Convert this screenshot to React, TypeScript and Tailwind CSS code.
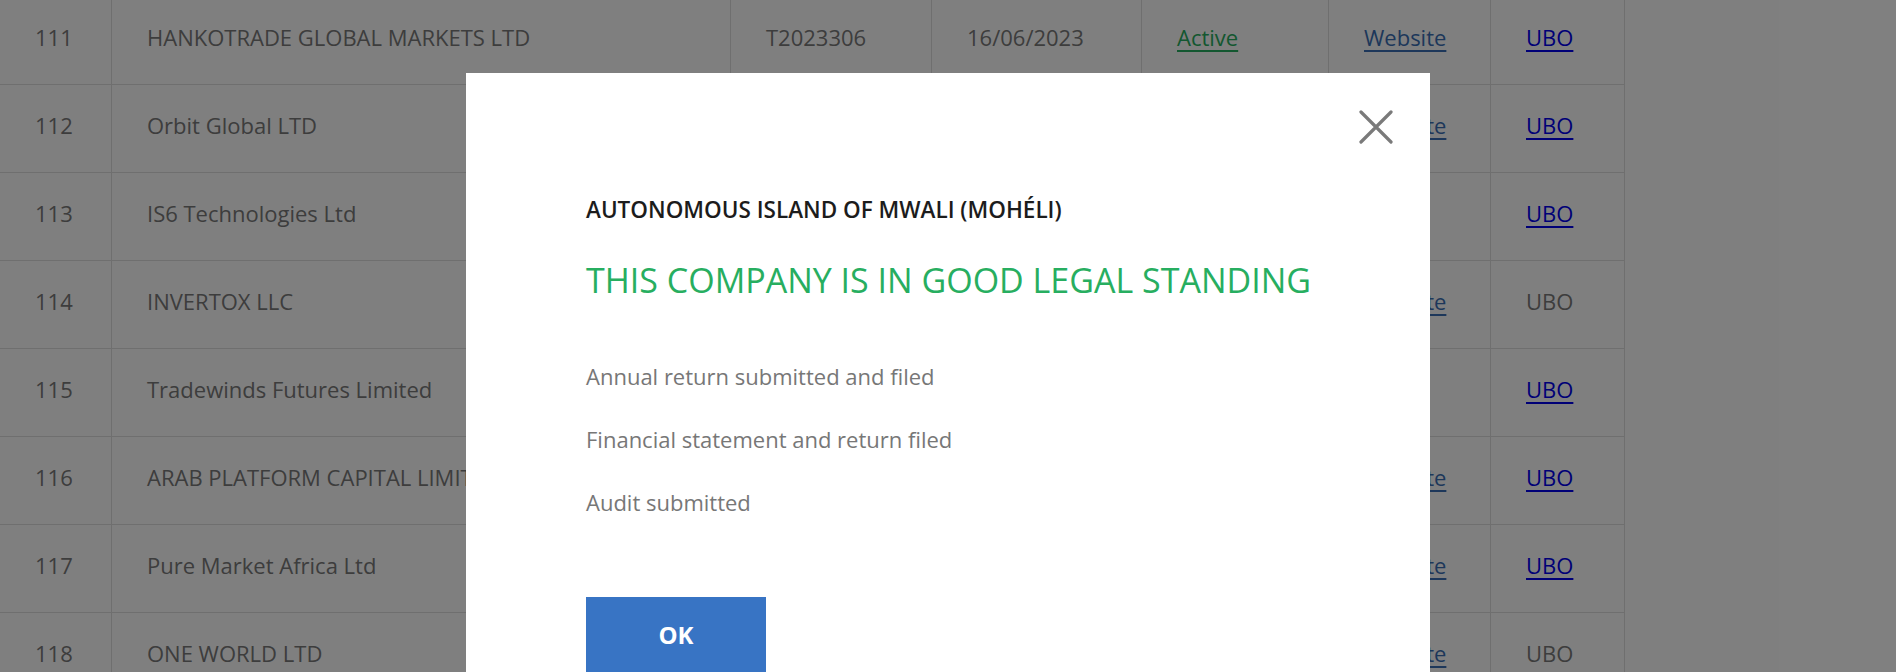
import React from "react";

type Row = {
  no: string;
  name: string;
  code: string;
  date: string;
  website: boolean;
  ubo: boolean;
};

const rows: Row[] = [
  { no: "111", name: "HANKOTRADE GLOBAL MARKETS LTD", code: "T2023306", date: "16/06/2023", website: true, ubo: true },
  { no: "112", name: "Orbit Global LTD", code: "T2023307", date: "19/06/2023", website: true, ubo: true },
  { no: "113", name: "IS6 Technologies Ltd", code: "T2023308", date: "20/06/2023", website: false, ubo: true },
  { no: "114", name: "INVERTOX LLC", code: "T2023309", date: "21/06/2023", website: true, ubo: false },
  { no: "115", name: "Tradewinds Futures Limited", code: "T2023310", date: "22/06/2023", website: false, ubo: true },
  { no: "116", name: "ARAB PLATFORM CAPITAL LIMITED", code: "T2023311", date: "23/06/2023", website: true, ubo: true },
  { no: "117", name: "Pure Market Africa Ltd", code: "T2023312", date: "26/06/2023", website: true, ubo: true },
  { no: "118", name: "ONE WORLD LTD", code: "T2023313", date: "27/06/2023", website: true, ubo: false },
];

const cell = "flex items-center pl-[35px] pb-[6px] border-r border-[#dedede] shrink-0";

function CloseIcon() {
  return (
    <svg width="34" height="34" viewBox="0 0 34 34" fill="none">
      <path d="M2 2 L32 32 M32 2 L2 32" stroke="#7a7a7a" strokeWidth="3.2" strokeLinecap="round" />
    </svg>
  );
}

export default function App() {
  return (
    <main className="relative h-[672px] overflow-hidden bg-white font-['Open_Sans',sans-serif]">
      {/* registry table behind the dialog */}
      <div className="-mt-[3px] w-[1625px] text-[22px] text-[#7a7a7a]">
        {rows.map((r) => (
          <div key={r.no} className="flex h-[88px] border-b border-[#dedede]">
            <div className={`${cell} w-[112px]`}>{r.no}</div>
            <div className={`${cell} w-[619px] whitespace-nowrap overflow-hidden`}>{r.name}</div>
            <div className={`${cell} w-[201px]`}>{r.code}</div>
            <div className={`${cell} w-[210px]`}>{r.date}</div>
            <div className={`${cell} w-[187px]`}>
              <a href="#" className="text-[#27ae60] underline underline-offset-4">Active</a>
            </div>
            <div className={`${cell} w-[162px]`}>
              {r.website && <a href="#" className="text-[#3a6fb5] underline underline-offset-4">Website</a>}
            </div>
            <div className={`${cell} w-[134px]`}>
              {r.ubo ? <a href="#" className="text-[#0000ee] underline underline-offset-4">UBO</a> : <span>UBO</span>}
            </div>
          </div>
        ))}
      </div>

      {/* dialog */}
      <div className="absolute inset-0 bg-black/50 flex justify-center pt-[73px]">
        <div className="relative w-[964px] h-[640px] bg-white pt-[124px] pl-[120px]">
          <button className="absolute top-[37px] right-[37px]">
            <CloseIcon />
          </button>
          <h3 className="text-[22.5px] leading-[26px] font-semibold text-[#1c1c1c]">
            AUTONOMOUS ISLAND OF MWALI (MOHÉLI)
          </h3>
          <h2 className="mt-[37px] text-[34px] leading-[40px] text-[#27ae60]">
            THIS COMPANY IS IN GOOD LEGAL STANDING
          </h2>
          <div className="mt-[61px] text-[22px] leading-[31px] text-[#777]">
            <p className="mb-[32px]">Annual return submitted and filed</p>
            <p className="mb-[32px]">Financial statement and return filed</p>
            <p>Audit submitted</p>
          </div>
          <button className="mt-[79px] w-[180px] h-[76px] bg-[#3874c4] text-white text-[24px] font-bold">
            OK
          </button>
        </div>
      </div>
    </main>
  );
}
